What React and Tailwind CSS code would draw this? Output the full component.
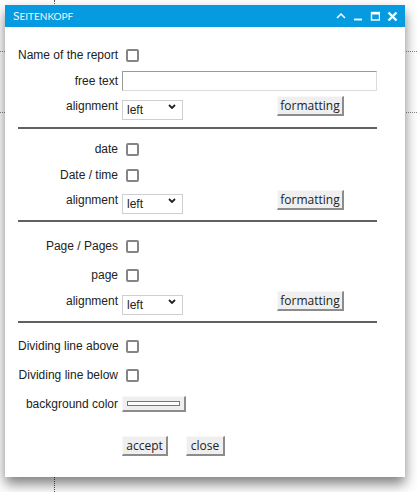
import React from 'react';

const labelFont = { fontFamily: '"Liberation Sans", Arial, sans-serif' };

// checkbox as drawn in the dialog
const Check = () => (
  <input
    type="checkbox"
    className="appearance-none ml-[4px] w-[13px] h-[13px] border-2 border-[#858585] rounded-[2px] bg-white"
  />
);

const Btn = ({ children, className = '' }) => (
  <button
    className={`h-[20px] flex items-center justify-center bg-[#efefef] text-[12px] text-[#222] leading-none border-t border-l border-r-2 border-b-2 border-t-[#f8f8f8] border-l-[#f8f8f8] border-r-[#8c8c8c] border-b-[#8c8c8c] font-['Open_Sans',sans-serif] ${className}`}
  >
    {children}
  </button>
);

const Align = () => (
  <div className="relative w-[61px] h-[20px]">
    <select
      className="appearance-none w-full h-full pl-[4px] py-0 leading-[16px] border border-[#cfcfcf] bg-white text-[12px] text-[#222] outline-none"
      style={labelFont}
      defaultValue="left"
    >
      <option value="left">left</option>
      <option value="center">center</option>
      <option value="right">right</option>
    </select>
    <svg className="absolute left-[46px] top-[8px] pointer-events-none" width="8" height="5" viewBox="0 0 8 5">
      <path d="M1 1 L4 4 L7 1" fill="none" stroke="#222" strokeWidth="1.8" />
    </svg>
  </div>
);

const Row = ({ label, h, children }) => (
  <div className={`flex items-center ${h}`}>
    <div className="w-[100px] text-right text-[12px] text-[#222] whitespace-nowrap" style={labelFont}>
      {label}
    </div>
    <div className="flex items-center pl-[4px]">{children}</div>
  </div>
);

const Rule = ({ mt }) => <div className={`w-[359px] border-t-2 border-[#616161] ${mt}`} />;

const AlignRow = ({ h }) => (
  <Row label="alignment" h={h}>
    <Align />
    <Btn className="ml-[94px] w-[67px]">formatting</Btn>
  </Row>
);

export default function App() {
  return (
    <div className="relative w-[417px] h-[492px] bg-white overflow-hidden">
      {/* dotted guide lines of the canvas behind the dialog */}
      <div className="absolute left-[54px] top-0 h-full border-l border-dotted border-[#555]" />
      <div className="absolute left-0 top-[51px] w-full border-t border-dotted border-[#888]" />
      <div className="absolute left-0 top-[112px] w-full border-t border-dotted border-[#888]" />

      <div className="absolute left-[5px] top-[5px] w-[400px] h-[472px] bg-white shadow-[0_7px_12px_rgba(0,0,0,0.5)] flex flex-col">
        <div className="h-[22px] bg-[#069ae0] flex items-center pl-[8px] pr-[7px]">
          <span className="text-[#eef7fd] font-['Lato',sans-serif] leading-none flex items-baseline">
            <span className="text-[12px]">S</span>
            <span className="text-[10px]">EITENKOPF</span>
          </span>
          <div className="ml-auto flex items-center gap-[7px]">
            <svg width="10" height="10" viewBox="0 0 10 10">
              <path d="M1 7 L5 3 L9 7" fill="none" stroke="#fff" strokeWidth="1.5" />
            </svg>
            <svg width="10" height="10" viewBox="0 0 10 10">
              <path d="M1 8.5 H9" fill="none" stroke="#fff" strokeWidth="1.8" />
            </svg>
            <svg width="10" height="10" viewBox="0 0 10 10">
              <rect x="1.5" y="1.5" width="8" height="7.5" fill="none" stroke="#fff" strokeWidth="1.4" />
              <rect x="1" y="1" width="9" height="2.5" fill="#fff" />
            </svg>
            <svg width="11" height="11" viewBox="0 0 11 11">
              <path d="M1.5 1.5 L9.5 9.5 M9.5 1.5 L1.5 9.5" fill="none" stroke="#fff" strokeWidth="2.4" />
            </svg>
          </div>
        </div>

        <div className="flex flex-col pl-[13px] pt-[14px]">
          <Row label="Name of the report" h="h-[28px]">
            <Check />
          </Row>
          <Row label="free text" h="h-[24px]">
            <input
              type="text"
              className="w-[255px] h-[20px] border border-t-[#9a9a9a] border-l-[#9a9a9a] border-r-[#dcdcdc] border-b-[#dcdcdc] outline-none"
            />
          </Row>
          <AlignRow h="h-[26px]" />
          <Rule mt="mt-[8px]" />

          <div className="mt-[6px]" />
          <Row label="date" h="h-[28px]">
            <Check />
          </Row>
          <Row label="Date / time" h="h-[24px]">
            <Check />
          </Row>
          <AlignRow h="h-[26px]" />
          <Rule mt="mt-[7px]" />

          <div className="mt-[10px]" />
          <Row label="Page / Pages" h="h-[28px]">
            <Check />
          </Row>
          <Row label="page" h="h-[30px]">
            <Check />
          </Row>
          <AlignRow h="h-[22px]" />
          <Rule mt="mt-[9px]" />

          <div className="mt-[9px]" />
          <Row label="Dividing line above" h="h-[28px]">
            <Check />
          </Row>
          <Row label="Dividing line below" h="h-[30px]">
            <Check />
          </Row>
          <Row label="background color" h="h-[28px]">
            <button className="w-[64px] h-[16px] bg-[#efefef] flex items-center justify-center border-t border-l border-r-2 border-b-2 border-t-[#f8f8f8] border-l-[#f8f8f8] border-r-[#8c8c8c] border-b-[#8c8c8c]">
              <span className="block w-[53px] h-[5px] bg-white border border-[#777]" />
            </button>
          </Row>

          <div className="flex mt-[18px] pl-[104px] gap-[18px]">
            <Btn className="w-[46px]">accept</Btn>
            <Btn className="w-[39px]">close</Btn>
          </div>
        </div>
      </div>
    </div>
  );
}
